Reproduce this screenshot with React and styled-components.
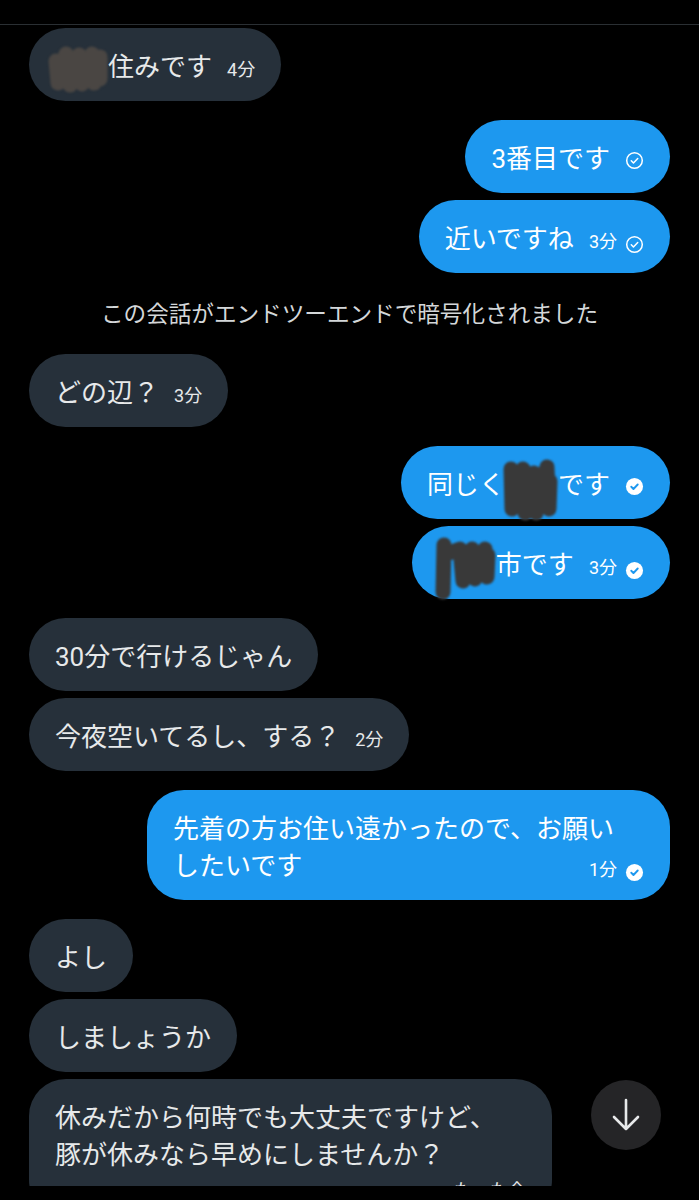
import styled, { createGlobalStyle } from "styled-components";

const GlobalStyle = createGlobalStyle`
  html, body {
    margin: 0;
    background: #000;
  }
  body {
    font-family: Roboto, "Noto Sans CJK JP", sans-serif;
  }
`;

// finger scribbles that hide names in the screenshot
const scribbles = {
  a: {
    w: 60, h: 46, up: 4, left: -7, color: "#4a4643",
    d: "M8 16 L10 38 L18 9 L22 40 L31 10 L34 39 L44 9 L46 38 L52 12 L52 34",
  },
  b: {
    w: 55, h: 62, up: 8, left: -2, color: "#393939",
    d: "M8 10 L9 50 M9 30 L20 10 L22 54 L31 14 L33 54 L44 8 L46 50 L47 22",
  },
  c: {
    w: 61, h: 63, up: 10, left: -3, color: "#393939",
    d: "M9 8 L8 55 M14 16 L25 12 L28 44 L37 12 L40 42 L50 12 L52 40 L53 18",
  },
};

const thread = [
  { kind: "group", mine: false, items: [{ parts: [{ redact: "a" }, "住みです"], time: "4分" }] },
  {
    kind: "group",
    mine: true,
    items: [
      { parts: ["3番目です"], check: "sent" },
      { parts: ["近いですね"], time: "3分", check: "sent" },
    ],
  },
  { kind: "note", text: "この会話がエンドツーエンドで暗号化されました" },
  { kind: "group", mine: false, items: [{ parts: ["どの辺？"], time: "3分" }] },
  {
    kind: "group",
    mine: true,
    items: [
      { parts: ["同じく", { redact: "b" }, "です"], check: "read" },
      { parts: [{ redact: "c" }, "市です"], time: "3分", check: "read" },
    ],
  },
  {
    kind: "group",
    mine: false,
    items: [
      { parts: ["30分で行けるじゃん"] },
      { parts: ["今夜空いてるし、する？"], time: "2分" },
    ],
  },
  {
    kind: "group",
    mine: true,
    items: [
      {
        parts: ["先着の方お住い遠かったので、お願い\nしたいです"],
        time: "1分",
        check: "read",
        wide: true,
        meta: "float",
      },
    ],
  },
  {
    kind: "group",
    mine: false,
    items: [
      { parts: ["よし"] },
      { parts: ["しましょうか"] },
      {
        parts: ["休みだから何時でも大丈夫ですけど、\n豚が休みなら早めにしませんか？"],
        time: "たった今",
        wide: true,
        meta: "row",
      },
    ],
  },
];

const Screen = styled.div`
  position: relative;
  height: 1186px;
  overflow: hidden;
  background: #000;
`;

const TopBar = styled.div`
  height: 24px;
  border-bottom: 1px solid #2a2f33;
`;

const Thread = styled.div`
  display: flex;
  flex-direction: column;
  padding: 3px 29px 0;
`;

const Group = styled.div`
  display: flex;
  flex-direction: column;
  align-items: ${(p) => (p.$mine ? "flex-end" : "flex-start")};
  gap: 7px;
  margin-top: 19px;

  &:first-child {
    margin-top: 0;
  }
`;

const Note = styled.div`
  margin-top: 19px;
  padding-top: 3px;
  text-align: center;
  font-size: 22.6px;
  line-height: 40px;
  color: #d4d7d9;
`;

const Bubble = styled.div`
  box-sizing: border-box;
  max-width: 523px;
  width: ${(p) => (p.$wide ? "523px" : "auto")};
  padding: 21px 26px 15px;
  border-radius: 37px;
  background: ${(p) => (p.$mine ? "#1d98ef" : "#26303a")};
  color: ${(p) => (p.$mine ? "#fff" : "#e7e9ea")};
  font-size: 26px;
  line-height: 37px;
  white-space: pre-wrap;
`;

const Meta = styled.span`
  display: inline-flex;
  align-items: center;
  gap: 8px;
  margin-left: 15px;
  font-size: 18px;
  line-height: 20px;
  white-space: nowrap;
`;

const FloatMeta = styled(Meta)`
  float: right;
  margin-top: 12px;
`;

const RowMeta = styled.div`
  display: flex;
  justify-content: flex-end;
  margin-top: 6px;
  font-size: 18px;
  line-height: 22px;
`;

const Scribble = styled.svg`
  display: inline-block;
  vertical-align: top;
  overflow: visible;
  width: ${(p) => p.$w}px;
  height: ${(p) => p.$h}px;
  margin-top: ${(p) => -p.$up}px;
  margin-bottom: ${(p) => 37 - p.$h + p.$up}px;
  margin-left: ${(p) => p.$left}px;
  filter: blur(1.2px);
`;

const CheckIcon = styled.svg`
  width: 19px;
  height: 19px;
  flex: none;
  position: relative;
  top: 2px;
`;

const ScrollDown = styled.button`
  position: absolute;
  right: 38px;
  bottom: 36px;
  width: 70px;
  height: 70px;
  border: none;
  border-radius: 50%;
  background: #252527;
  display: flex;
  align-items: center;
  justify-content: center;
  padding: 0;
`;

const Redaction = ({ id }) => {
  const s = scribbles[id];
  return (
    <Scribble
      $w={s.w}
      $h={s.h}
      $up={s.up}
      $left={s.left}
      viewBox={`0 0 ${s.w} ${s.h}`}
    >
      <path
        d={s.d}
        fill="none"
        stroke={s.color}
        strokeWidth="15"
        strokeLinecap="round"
        strokeLinejoin="round"
      />
    </Scribble>
  );
};

const Check = ({ type }) => (
  <CheckIcon viewBox="0 0 20 20">
    {type === "read" ? (
      <>
        <circle cx="10" cy="10" r="9" fill="#fff" />
        <path
          d="M6.6 10.3l2.3 2.3 4.5-4.7"
          fill="none"
          stroke="#1d98ef"
          strokeWidth="2"
          strokeLinecap="round"
          strokeLinejoin="round"
        />
      </>
    ) : (
      <>
        <circle cx="10" cy="10" r="8.2" fill="none" stroke="#fff" strokeWidth="1.6" />
        <path
          d="M6.6 10.3l2.3 2.3 4.5-4.7"
          fill="none"
          stroke="#fff"
          strokeWidth="1.6"
          strokeLinecap="round"
          strokeLinejoin="round"
        />
      </>
    )}
  </CheckIcon>
);

const Message = ({ mine, msg }) => {
  const hasMeta = msg.time || msg.check;
  const metaBody = (
    <>
      {msg.time && <span>{msg.time}</span>}
      {msg.check && <Check type={msg.check} />}
    </>
  );

  return (
    <Bubble $mine={mine} $wide={msg.wide}>
      {msg.parts.map((part, i) =>
        typeof part === "string" ? (
          <span key={i}>{part}</span>
        ) : (
          <Redaction key={i} id={part.redact} />
        )
      )}
      {hasMeta && !msg.meta && <Meta>{metaBody}</Meta>}
      {hasMeta && msg.meta === "float" && <FloatMeta>{metaBody}</FloatMeta>}
      {hasMeta && msg.meta === "row" && <RowMeta>{metaBody}</RowMeta>}
    </Bubble>
  );
};

export default function App() {
  return (
    <>
      <GlobalStyle />
      <Screen>
        <TopBar />
        <Thread>
          {thread.map((entry, i) =>
            entry.kind === "note" ? (
              <Note key={i}>{entry.text}</Note>
            ) : (
              <Group key={i} $mine={entry.mine}>
                {entry.items.map((msg, j) => (
                  <Message key={j} mine={entry.mine} msg={msg} />
                ))}
              </Group>
            )
          )}
        </Thread>
        <ScrollDown aria-label="最新へ移動">
          <svg width="40" height="40" viewBox="0 0 40 40">
            <path
              d="M20 5v29M8 22l12 12 12-12"
              fill="none"
              stroke="#e7e9ea"
              strokeWidth="2.6"
              strokeLinecap="round"
              strokeLinejoin="round"
            />
          </svg>
        </ScrollDown>
      </Screen>
    </>
  );
}
